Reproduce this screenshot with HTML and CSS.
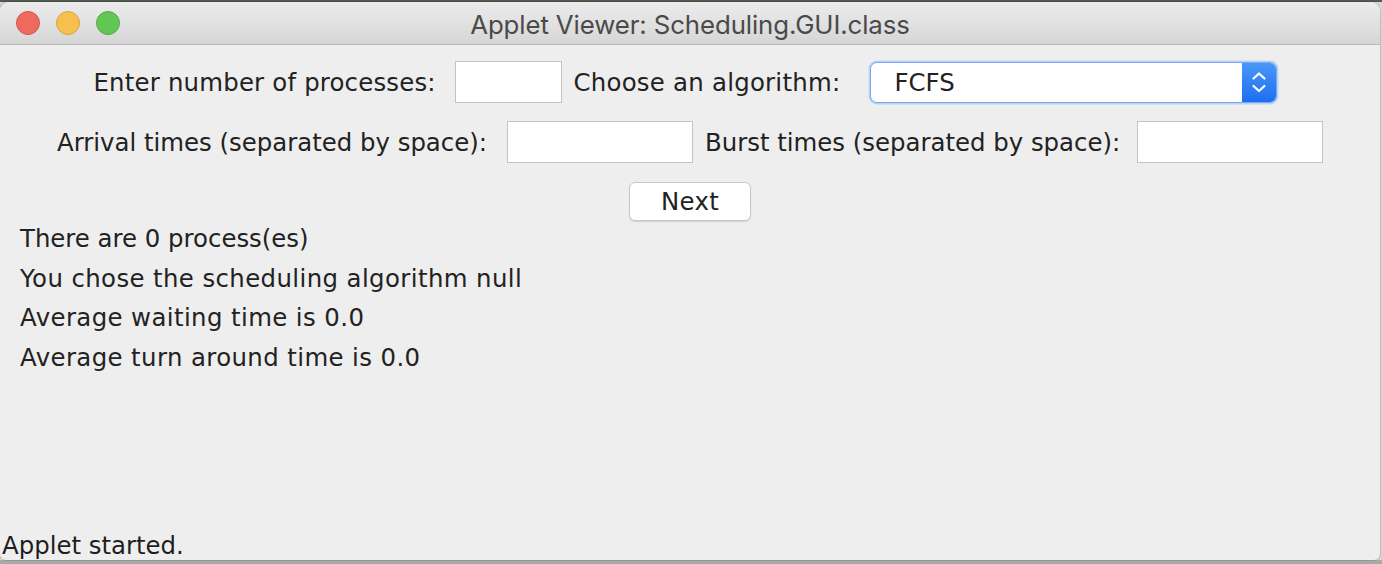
FILE: index.html
```html
<!DOCTYPE html>
<html>
<head>
<meta charset="utf-8">
<title>Applet Viewer: Scheduling.GUI.class</title>
<link rel="stylesheet" href="styles.css">
</head>
<body>
<div class="desktop">
  <div class="window">
    <div class="titlebar">
      <div class="lights">
        <span class="light red"></span>
        <span class="light yellow"></span>
        <span class="light green"></span>
      </div>
      <div class="title">Applet Viewer: Scheduling.GUI.class</div>
      <div class="spacer"></div>
    </div>
    <div class="applet">
      <div class="row row1">
        <label class="lbl lbl-count">Enter number of processes:</label>
        <div class="field field-count"></div>
        <label class="lbl lbl-algo">Choose an algorithm:</label>
        <div class="select">
          <span class="select-value">FCFS</span>
          <span class="stepper">
            <svg width="34" height="40" viewBox="0 0 34 40">
              <polyline points="11.5,16.5 17,11.5 22.5,16.5" fill="none" stroke="#fff" stroke-width="2.2" stroke-linecap="round" stroke-linejoin="round"/>
              <polyline points="11.5,24 17,29 22.5,24" fill="none" stroke="#fff" stroke-width="2.2" stroke-linecap="round" stroke-linejoin="round"/>
            </svg>
          </span>
        </div>
      </div>
      <div class="row row2">
        <label class="lbl lbl-arrival">Arrival times (separated by space):</label>
        <div class="field field-wide"></div>
        <label class="lbl lbl-burst">Burst times (separated by space):</label>
        <div class="field field-wide last"></div>
      </div>
      <div class="row row3">
        <button class="btn">Next</button>
      </div>
      <div class="output">
        <p>There are 0 process(es)</p>
        <p class="wide">You chose the scheduling algorithm null</p>
        <p class="wide">Average waiting time is 0.0</p>
        <p class="wide">Average turn around time is 0.0</p>
      </div>
    </div>
    <div class="status">Applet started.</div>
  </div>
  <div class="side"></div>
</div>
</body>
</html>
```
FILE: styles.css
```css
* { box-sizing: border-box; }
html, body {
  margin: 0;
  padding: 0;
  width: 1382px;
  height: 564px;
  overflow: hidden;
}
body {
  background: #b4b4b4;
  font-family: "DejaVu Sans", sans-serif;
}
.desktop {
  display: flex;
  width: 1382px;
  height: 564px;
  padding-top: 2px;
  background: linear-gradient(to bottom, #515b4e 0, #515b4e 2px, #d6d6d6 2px, #d6d6d6 560px, #a9a9a9 560px);
}
.window {
  width: 1380px;
  height: 558px;
  display: flex;
  flex-direction: column;
  background: #eeeeee;
  border-radius: 9px 9px 6px 6px;
  overflow: hidden;
  box-shadow: 0 0 0 1px rgba(0,0,0,0.12);
}
.side {
  flex: 1;
}
.titlebar {
  height: 43px;
  flex: none;
  display: grid;
  grid-template-columns: 1fr auto 1fr;
  align-items: center;
  background: linear-gradient(to bottom, #ececec, #d6d6d6);
  border-bottom: 1px solid #b9b9b9;
}
.lights {
  display: flex;
  gap: 16px;
  padding-left: 16px;
}
.light {
  width: 24px;
  height: 24px;
  border-radius: 50%;
  border: 1px solid;
}
.red { background: #ee6a5f; border-color: #d6574c; }
.yellow { background: #f6c04f; border-color: #d9a240; }
.green { background: #62c655; border-color: #54aa46; }
.title {
  font-family: "Inter", "Liberation Sans", sans-serif;
  font-size: 25.8px;
  color: #4a4a4a;
  letter-spacing: -0.1px;
  padding-top: 2px;
}
.applet {
  padding-top: 16px;
  color: #222222;
  font-size: 24.4px;
}
.row {
  display: flex;
  justify-content: center;
  align-items: center;
}
.row1 {
  height: 42px;
  padding-right: 10px;
}
.row2 {
  height: 42px;
  margin-top: 18px;
}
.row3 {
  height: 40px;
  margin-top: 18px;
}
.lbl {
  white-space: nowrap;
  line-height: 30px;
  padding-top: 2px;
}
.lbl-count { width: 343px; margin-right: 18px; letter-spacing: 0.2px; }
.lbl-algo { width: 267px; margin-left: 12px; margin-right: 29px; letter-spacing: 0.25px; }
.lbl-arrival { width: 431px; margin-right: 19px; }
.lbl-burst { width: 413px; margin-left: 12px; margin-right: 19px; }
.field {
  height: 42px;
  background: #ffffff;
  border: 1px solid #c3c3c3;
}
.field-count { width: 107px; }
.field-wide { width: 186px; }
.select {
  width: 407px;
  height: 41px;
  display: flex;
  align-items: center;
  background: #ffffff;
  border: 1px solid #78a8ef;
  border-radius: 7px;
  box-shadow: 0 0 0 1.5px #b9d3f7;
  overflow: hidden;
}
.select-value {
  flex: 1;
  padding-left: 24px;
  color: #222;
}
.stepper {
  width: 34px;
  height: 100%;
  display: flex;
  align-items: center;
  justify-content: center;
  background: linear-gradient(to bottom, #4a97f8, #1d6ff1);
}
.btn {
  width: 122px;
  height: 39px;
  margin-top: 1px;
  font-family: "DejaVu Sans", sans-serif;
  font-size: 24.4px;
  color: #222;
  background: #ffffff;
  border: 1px solid #c8c8c8;
  border-radius: 6px;
  box-shadow: 0 1px 1px rgba(0,0,0,0.12);
  padding: 0 0 0 0;
  letter-spacing: 0.3px;
}
.output {
  margin-top: -2px;
  padding-left: 20px;
}
.output p {
  margin: 0;
  line-height: 39.7px;
  white-space: nowrap;
}
.output p.wide {
  letter-spacing: 0.4px;
}
.status {
  margin-top: auto;
  padding-left: 2px;
  height: 28px;
  line-height: 28px;
  font-size: 24.4px;
  color: #1e1e1e;
  white-space: nowrap;
}
```
